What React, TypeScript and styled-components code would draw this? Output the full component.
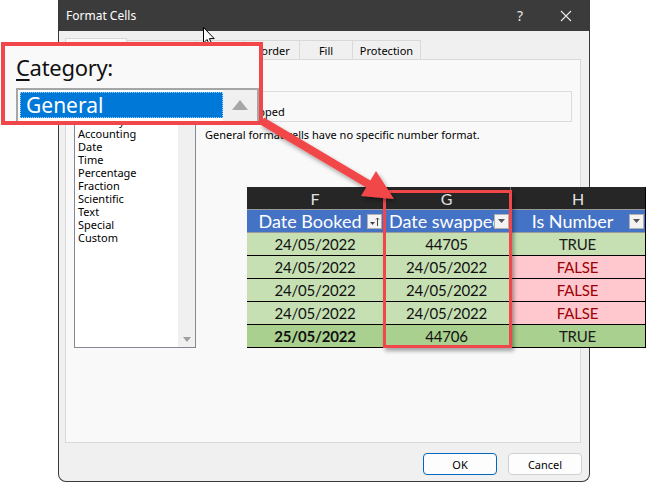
import React from "react";
import styled, { createGlobalStyle } from "styled-components";

const GlobalStyle = createGlobalStyle`
  html, body {
    margin: 0;
    padding: 0;
    background: #ffffff;
  }
  body {
    font-family: "Noto Sans", "Open Sans", sans-serif;
  }
`;

const Stage = styled.div`
  position: relative;
  width: 646px;
  height: 484px;
  overflow: hidden;
  background: #ffffff;
`;

/* ---------- dialog ---------- */

const Dialog = styled.div`
  margin-left: 58px;
  width: 532px;
  height: 482px;
  box-sizing: border-box;
  border: 1px solid #3a3a3a;
  border-top: none;
  border-radius: 0 0 8px 8px;
  background: #f0f0f0;
  display: flex;
  flex-direction: column;
  overflow: hidden;
  font-size: 11px;
  color: #000;
`;

const TitleBar = styled.div`
  height: 31px;
  flex: none;
  background: #3b3b3b;
  color: #ffffff;
  display: flex;
  align-items: center;
  padding-left: 7px;
  font-size: 12px;
`;

const Title = styled.span`
  flex: 1;
`;

const TitleButton = styled.div`
  width: 46px;
  height: 31px;
  display: flex;
  align-items: center;
  justify-content: center;
  font-size: 14px;
  color: #e8e8e8;
`;

const Body = styled.div`
  flex: 1;
  display: flex;
  flex-direction: column;
  padding: 9px 8px 0 6px;
`;

const TabRow = styled.div`
  display: flex;
  height: 20px;
  align-items: flex-end;
  margin-bottom: -1px;
`;

const Tab = styled.div<{ $w: number; $active?: boolean }>`
  position: relative;
  width: ${(p) => p.$w}px;
  height: ${(p) => (p.$active ? 22 : 20)}px;
  box-sizing: border-box;
  border: 1px solid #d9d9d9;
  border-bottom-color: ${(p) => (p.$active ? "#f9f9f9" : "#d9d9d9")};
  background: ${(p) => (p.$active ? "#f9f9f9" : "#f0f0f0")};
  display: flex;
  align-items: center;
  justify-content: center;
  margin-right: -1px;
  font-size: 11px;
`;

const Panel = styled.div`
  height: 384px;
  box-sizing: border-box;
  border: 1px solid #d9d9d9;
  background: #f9f9f9;
  display: flex;
  gap: 9px;
  padding: 5px 8px;
`;

const LeftCol = styled.div`
  width: 122px;
  display: flex;
  flex-direction: column;
`;

const SmallLabel = styled.div`
  height: 16px;
  line-height: 16px;
  margin-bottom: 5px;
`;

const ListBox = styled.div`
  height: 262px;
  box-sizing: border-box;
  border: 1px solid #828790;
  background: #ffffff;
  display: flex;
`;

const ListItems = styled.div`
  flex: 1;
  padding: 1px 0 0 3px;
`;

const ListItem = styled.div<{ $selected?: boolean }>`
  height: 13px;
  line-height: 13px;
  white-space: nowrap;
  background: ${(p) => (p.$selected ? "#0078d7" : "transparent")};
  color: ${(p) => (p.$selected ? "#fff" : "#000")};
`;

const ScrollTrack = styled.div`
  width: 17px;
  background: #f0f0f0;
  display: flex;
  flex-direction: column;
  justify-content: space-between;
  align-items: center;
  padding: 5px 0;
`;

const RightCol = styled.div`
  flex: 1;
  display: flex;
  flex-direction: column;
`;

const SampleLabel = styled.div`
  height: 16px;
  line-height: 16px;
  margin-top: 10px;
  padding-left: 6px;
`;

const SampleBox = styled.div`
  height: 31px;
  box-sizing: border-box;
  border: 1px solid #dcdcdc;
  display: flex;
  align-items: flex-end;
  padding: 0 0 2px 5px;
`;

const Description = styled.div`
  margin-top: 6px;
  line-height: 14px;
`;

const Footer = styled.div`
  display: flex;
  justify-content: flex-end;
  gap: 11px;
  padding: 10px 0 0 0;
  margin-right: -1px;
`;

const Button = styled.div<{ $default?: boolean }>`
  width: 74px;
  height: 22px;
  box-sizing: border-box;
  border: 1px solid ${(p) => (p.$default ? "#0067c0" : "#d0d0d0")};
  border-radius: 4px;
  background: #fdfdfd;
  display: flex;
  align-items: center;
  justify-content: center;
  font-size: 11px;
`;

/* ---------- overlays ---------- */

const Callout = styled.div`
  position: absolute;
  z-index: 5;
  left: 1px;
  top: 42px;
  width: 262px;
  height: 83px;
  box-sizing: border-box;
  border: 4px solid #f2474a;
  background: #f9f9f9;
  overflow: hidden;
  padding: 7px 0 0 11px;
`;

const BigLabel = styled.div`
  font-size: 22px;
  line-height: 28px;
  color: #111;
  height: 35px;
  letter-spacing: -0.3px;
  u {
    text-decoration-thickness: 2px;
    text-underline-offset: 3px;
  }
`;

const BigList = styled.div`
  width: 243px;
  height: 40px;
  box-sizing: border-box;
  border: 2px solid #a6a6a6;
  background: #ffffff;
  display: flex;
`;

const BigItem = styled.div`
  flex: 1;
  height: 26px;
  margin: 2px 0 0 2px;
  background: #0078d7;
  color: #ffffff;
  font-size: 21px;
  line-height: 26px;
  padding-left: 6px;
  outline: 1px dotted #9fd0ff;
  outline-offset: -1px;
`;

const BigScroll = styled.div`
  width: 34px;
  background: #f0f0f0;
  display: flex;
  justify-content: center;
  padding-top: 10px;
  box-sizing: border-box;
`;

const Sheet = styled.div`
  position: absolute;
  z-index: 2;
  left: 247px;
  top: 187px;
  width: 399px;
  display: grid;
  grid-template-columns: 136px 127px 135px;
  font-family: Lato, "Liberation Sans", sans-serif;
  font-size: 15px;
  border-right: 1px solid #000;
  box-sizing: border-box;
`;

const ColLetter = styled.div<{ $sep?: boolean }>`
  height: 22px;
  background: #262626;
  color: #e0e0e0;
  font-size: 16px;
  display: flex;
  align-items: center;
  justify-content: center;
  border-left: ${(p) => (p.$sep ? "1px solid #6e6e6e" : "none")};
`;

const HeadCell = styled.div`
  height: 22px;
  background: #4472c4;
  color: #ffffff;
  font-size: 18px;
  display: flex;
  align-items: center;
  border-top: 1px solid #9a9a9a;
  border-bottom: 1px solid #9a9a9a;
  padding-left: 6px;
  padding-right: 1px;
  overflow: hidden;
`;

const HeadText = styled.span<{ $left?: boolean }>`
  flex: 1;
  text-align: ${(p) => (p.$left ? "left" : "center")};
  white-space: nowrap;
  overflow: hidden;
`;

const FilterButton = styled.div`
  width: 15px;
  height: 15px;
  flex: none;
  box-sizing: border-box;
  background: #f3f3f3;
  border: 1px solid #b0b0b0;
  display: flex;
  align-items: center;
  justify-content: center;
`;

const DataCell = styled.div<{ $bg: string; $color?: string; $bold?: boolean }>`
  height: 22px;
  background: ${(p) => p.$bg};
  color: ${(p) => p.$color ?? "#111"};
  font-weight: ${(p) => (p.$bold ? 700 : 400)};
  letter-spacing: -0.2px;
  border-bottom: 1px solid #000;
  display: flex;
  align-items: center;
  justify-content: center;
`;

const Highlight = styled.div`
  position: absolute;
  z-index: 3;
  left: 383px;
  top: 190px;
  width: 129px;
  height: 158px;
  box-sizing: border-box;
  border: 3px solid #f2474a;
  box-shadow: 2px 3px 4px rgba(0, 0, 0, 0.35);
`;

const Overlay = styled.svg`
  position: absolute;
  z-index: 4;
  left: 0;
  top: 0;
  pointer-events: none;
`;

const categories = [
  "General",
  "Number",
  "Currency",
  "Accounting",
  "Date",
  "Time",
  "Percentage",
  "Fraction",
  "Scientific",
  "Text",
  "Special",
  "Custom",
];

const tabs: [string, number][] = [
  ["Number", 62],
  ["Alignment", 70],
  ["Font", 50],
  ["Border", 56],
  ["Fill", 54],
  ["Protection", 69],
];

type Row = { f: string; g: string; h: boolean; last?: boolean };

const rows: Row[] = [
  { f: "24/05/2022", g: "44705", h: true },
  { f: "24/05/2022", g: "24/05/2022", h: false },
  { f: "24/05/2022", g: "24/05/2022", h: false },
  { f: "24/05/2022", g: "24/05/2022", h: false },
  { f: "25/05/2022", g: "44706", h: true, last: true },
];

const Caret: React.FC<{ up?: boolean; size?: number; color?: string }> = ({
  up,
  size = 8,
  color = "#a0a0a0",
}) => (
  <svg width={size} height={size / 2 + 1} viewBox="0 0 8 5">
    <polygon points={up ? "0,5 8,5 4,0" : "0,0 8,0 4,5"} fill={color} />
  </svg>
);

const FilterIcon: React.FC<{ sorted?: boolean }> = ({ sorted }) =>
  sorted ? (
    <svg width="11" height="11" viewBox="0 0 11 11">
      <polygon points="1,6 6,6 3.5,9" fill="#444" />
      <line x1="8.5" y1="2" x2="8.5" y2="10" stroke="#444" strokeWidth="1" />
      <polyline points="7,3.5 8.5,2 10,3.5" fill="none" stroke="#444" strokeWidth="1" />
    </svg>
  ) : (
    <svg width="9" height="6" viewBox="0 0 9 6">
      <polygon points="1,1 8,1 4.5,5" fill="#555" />
    </svg>
  );

export default function App() {
  return (
    <Stage>
      <GlobalStyle />
      <Dialog>
        <TitleBar>
          <Title>Format Cells</Title>
          <TitleButton>?</TitleButton>
          <TitleButton>
            <svg width="12" height="12" viewBox="0 0 12 12">
              <path d="M1 1 L11 11 M11 1 L1 11" stroke="#eaeaea" strokeWidth="1.1" />
            </svg>
          </TitleButton>
        </TitleBar>
        <Body>
          <TabRow>
            {tabs.map(([name, w], i) => (
              <Tab key={name} $w={w} $active={i === 0}>
                {name}
              </Tab>
            ))}
          </TabRow>
          <Panel>
            <LeftCol>
              <SmallLabel>
                <u>C</u>ategory:
              </SmallLabel>
              <ListBox>
                <ListItems>
                  {categories.map((c, i) => (
                    <ListItem key={c} $selected={i === 0}>
                      {c}
                    </ListItem>
                  ))}
                </ListItems>
                <ScrollTrack>
                  <Caret up />
                  <Caret />
                </ScrollTrack>
              </ListBox>
            </LeftCol>
            <RightCol>
              <SampleLabel>Sample</SampleLabel>
              <SampleBox>Date swapped</SampleBox>
              <Description>General format cells have no specific number format.</Description>
            </RightCol>
          </Panel>
          <Footer>
            <Button $default>OK</Button>
            <Button>Cancel</Button>
          </Footer>
        </Body>
      </Dialog>

      <Sheet>
        <ColLetter>F</ColLetter>
        <ColLetter>G</ColLetter>
        <ColLetter $sep>H</ColLetter>
        <HeadCell>
          <HeadText>Date Booked</HeadText>
          <FilterButton>
            <FilterIcon sorted />
          </FilterButton>
        </HeadCell>
        <HeadCell>
          <HeadText $left>Date swapped</HeadText>
          <FilterButton>
            <FilterIcon />
          </FilterButton>
        </HeadCell>
        <HeadCell>
          <HeadText>Is Number</HeadText>
          <FilterButton>
            <FilterIcon />
          </FilterButton>
        </HeadCell>
        {rows.map((r, i) => {
          const green = r.last ? "#a9d08e" : "#c6e0b4";
          return (
            <React.Fragment key={i}>
              <DataCell $bg={green} $bold={r.last}>
                {r.f}
              </DataCell>
              <DataCell $bg={green}>{r.g}</DataCell>
              <DataCell
                $bg={r.h ? green : "#ffc7ce"}
                $color={r.h ? "#1a1a1a" : "#9c0006"}
              >
                {r.h ? "TRUE" : "FALSE"}
              </DataCell>
            </React.Fragment>
          );
        })}
      </Sheet>

      <Highlight />

      <Overlay width="646" height="484" viewBox="0 0 646 484">
        <defs>
          <filter id="shadow" x="-10%" y="-10%" width="130%" height="140%">
            <feDropShadow dx="2" dy="3" stdDeviation="2" floodColor="#000" floodOpacity="0.35" />
          </filter>
        </defs>
        <g filter="url(#shadow)" fill="#f2474a" stroke="none">
          <line x1="262" y1="121" x2="370" y2="185" stroke="#f2474a" strokeWidth="8" />
          <polygon points="394,199 361,196 376,171" />
        </g>
        <path
          d="M203.5 27.5 L203.5 43 L207 39.5 L209.6 45.2 L212 44.2 L209.4 38.6 L214.2 38.6 Z"
          fill="#ffffff"
          stroke="#000"
          strokeWidth="1"
        />
      </Overlay>

      <Callout>
        <BigLabel>
          <u>C</u>ategory:
        </BigLabel>
        <BigList>
          <BigItem>General</BigItem>
          <BigScroll>
            <Caret up size={18} color="#a6a6a6" />
          </BigScroll>
        </BigList>
      </Callout>
    </Stage>
  );
}
